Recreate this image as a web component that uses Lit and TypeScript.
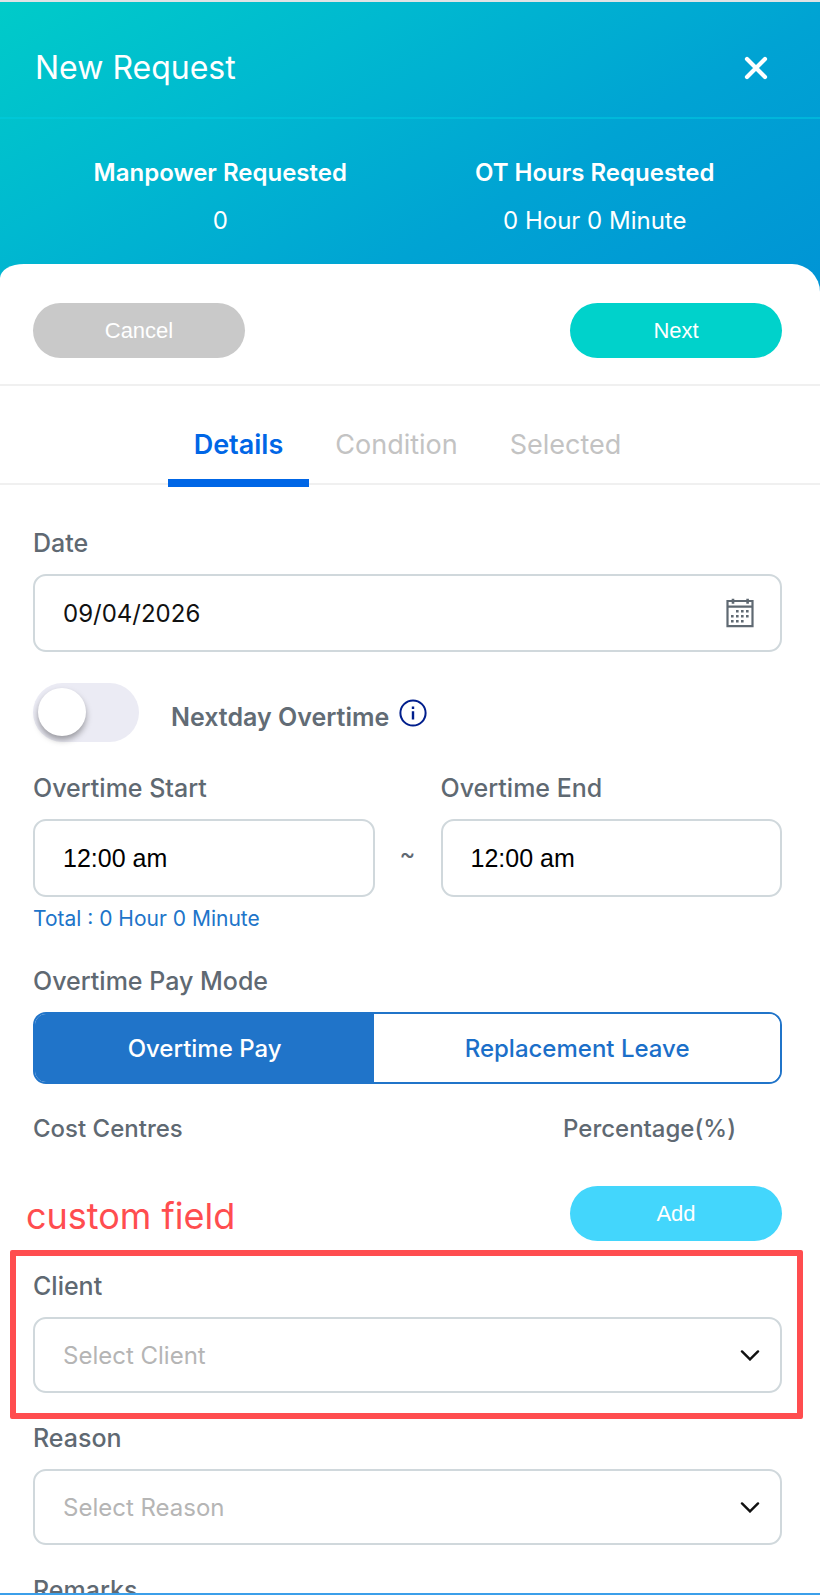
import { LitElement, html, css } from "lit";
import { customElement, property, state } from "lit/decorators.js";
import { classMap } from "lit/directives/class-map.js";

@customElement("select-field")
class SelectField extends LitElement {
  @property() label = "";
  @property() placeholder = "";

  static styles = css`
    :host {
      display: block;
    }
    .label {
      display: block;
      margin-bottom: 15px;
      font-size: 25px;
      line-height: 32px;
      font-weight: 500;
      color: #5f6972;
    }
    .box {
      display: grid;
      align-items: center;
    }
    .control {
      grid-area: 1 / 1;
      appearance: none;
      width: 100%;
      height: 76px;
      box-sizing: border-box;
      margin: 0;
      padding: 0 72px 0 28px;
      border: 2px solid #d0d8dc;
      border-radius: 13px;
      background: #fff;
      color: #b5b5b5;
      font-family: inherit;
      font-size: 24px;
    }
    .chevron {
      grid-area: 1 / 1;
      justify-self: end;
      width: 20px;
      height: 12px;
      margin-right: 22px;
      pointer-events: none;
    }
  `;

  render() {
    return html`
      <label class="label" for="control">${this.label}</label>
      <div class="box">
        <select class="control" id="control">
          <option>${this.placeholder}</option>
        </select>
        <svg class="chevron" viewBox="0 0 20 12" fill="none" stroke="#111" stroke-width="2.4" aria-hidden="true">
          <path d="M2 2.4 L10 10.4 L18 2.4" stroke-linecap="round" />
        </svg>
      </div>
    `;
  }
}

@customElement("app-root")
class AppRoot extends LitElement {
  @state() private tab = "Details";
  @state() private payMode = "Overtime Pay";

  static styles = css`
    :host {
      display: flex;
      flex-direction: column;
      height: 100vh;
      box-sizing: border-box;
      border-top: 2px solid #dfe3e5;
      border-bottom: 2px solid #3b9fea;
      background: #fff;
      font-family: Inter, "Liberation Sans", sans-serif;
      font-size: 24px;
      line-height: 32px;
    }
    button {
      margin: 0;
      border: 0;
      font-family: inherit;
      cursor: pointer;
    }
    .page {
      flex: 1;
      min-height: 0;
      overflow: hidden;
    }
    .header {
      padding-bottom: 28px;
      background: linear-gradient(150deg, #00cbc9 0%, #00b9d0 31%, #00a3d3 64%, #0094d5 100%);
      color: #fff;
    }
    .title-row {
      display: flex;
      align-items: center;
      justify-content: space-between;
      padding: 46px 44px 29px 35px;
      border-bottom: 2px solid rgba(0, 205, 225, 0.5);
    }
    .title {
      margin: 0;
      font-size: 32px;
      line-height: 40px;
      font-weight: 400;
    }
    .close {
      display: grid;
      place-items: center;
      width: 40px;
      height: 40px;
      padding: 0;
      background: none;
    }
    .close-icon {
      width: 24px;
      height: 24px;
    }
    .stats {
      display: grid;
      grid-template-columns: 1fr 1fr;
      margin: 0;
      padding: 38px 38px 27px 33px;
      text-align: center;
    }
    .stat-name {
      font-weight: 600;
    }
    .stat-value {
      margin: 16px 0 0;
    }
    .sheet {
      margin-top: -28px;
      border-radius: 24px 28px 0 0 / 14px 28px 0 0;
      background: #fff;
    }
    .actions {
      display: flex;
      justify-content: space-between;
      padding: 39px 38px 26px 33px;
      border-bottom: 2px solid #f0f0f0;
    }
    .pill {
      width: 212px;
      height: 55px;
      border-radius: 28px;
      color: #fff;
      font-family: "Liberation Sans", Arial, sans-serif;
      font-size: 22px;
    }
    .cancel {
      background: #c9c9c9;
    }
    .next {
      background: #00d2cb;
    }
    .add {
      background: #43d6fc;
    }
    .tabs {
      display: flex;
      justify-content: center;
      padding: 43px 5px 0 0;
      border-bottom: 2px solid #f0f0f0;
    }
    .tab {
      margin-bottom: -4px;
      padding: 0 26px 18px;
      border-bottom: 8px solid transparent;
      background: none;
      color: #c3c3c3;
      font-size: 27px;
      line-height: 32px;
    }
    .tab.active {
      border-bottom-color: #0066e6;
      color: #0066e6;
      font-weight: 600;
    }
    .form {
      display: flex;
      flex-direction: column;
      gap: 29px;
      padding: 42px 38px 29px 33px;
    }
    .label {
      display: block;
      font-size: 25px;
      font-weight: 500;
      color: #5f6972;
    }
    .field .label {
      margin-bottom: 15px;
    }
    .input-box {
      display: flex;
      align-items: center;
      height: 78px;
      box-sizing: border-box;
      padding: 0 26px 0 28px;
      border: 2px solid #d0d8dc;
      border-radius: 13px;
      background: #fff;
    }
    .input {
      flex: 1;
      width: 100%;
      min-width: 0;
      padding: 0;
      border: 0;
      outline: 0;
      background: none;
      color: #111;
      font-family: inherit;
      font-size: 24px;
    }
    .time .input {
      color: #000;
      font-family: "Liberation Sans", Arial, sans-serif;
      font-size: 25px;
    }
    .calendar {
      display: grid;
      padding: 0;
      background: none;
    }
    .calendar-icon {
      width: 28px;
      height: 30px;
    }
    .nextday {
      display: flex;
      align-items: center;
      height: 62px;
    }
    .switch {
      appearance: none;
      display: flex;
      align-items: center;
      width: 106px;
      height: 59px;
      margin: 0 32px 0 0;
      padding: 0 5px;
      box-sizing: border-box;
      border-radius: 30px;
      background: #ebebf4;
      cursor: pointer;
    }
    .switch::before {
      content: "";
      width: 48px;
      height: 48px;
      border-radius: 50%;
      background: #fff;
      box-shadow: 0 4px 6px rgba(0, 0, 0, 0.35);
    }
    .switch:checked {
      justify-content: flex-end;
      background: #2074c9;
    }
    .nextday .label {
      padding-top: 10px;
      font-weight: 600;
      color: #626c75;
    }
    .info {
      display: grid;
      margin-left: 10px;
      padding: 2px 0 0;
      background: none;
    }
    .info-icon {
      width: 28px;
      height: 28px;
    }
    .times {
      display: grid;
      grid-template-columns: minmax(0, 1fr) 66px minmax(0, 1fr);
      align-items: end;
    }
    .tilde {
      padding-bottom: 27px;
      text-align: center;
      color: #5f6972;
    }
    .total {
      margin: 8px 0 3px;
      font-size: 21px;
      line-height: 28px;
      color: #2074c9;
    }
    .segments {
      display: grid;
      grid-template-columns: 341fr 408fr;
      height: 72px;
      box-sizing: border-box;
      overflow: hidden;
      border: 2px solid #2074c9;
      border-radius: 13px;
    }
    .segment {
      background: #fff;
      color: #1b6fc9;
      font-size: 24px;
      font-weight: 500;
    }
    .segment.active {
      background: #2074c9;
      color: #fff;
    }
    .cost-head {
      display: flex;
      justify-content: space-between;
      padding-right: 46px;
    }
    .cost-head .label {
      font-size: 24px;
    }
    .cost-actions {
      display: flex;
      justify-content: flex-end;
      padding-top: 12px;
    }
    .custom {
      position: relative;
    }
    .custom-frame {
      position: absolute;
      inset: -20px -21px -26px -23px;
      border: 6px solid #ff4d4f;
      border-radius: 2px;
      pointer-events: none;
    }
    .custom-note {
      position: absolute;
      left: -7px;
      bottom: calc(100% + 32px);
      font-size: 36px;
      line-height: 44px;
      color: #ff4d4f;
    }
  `;

  private renderTab(name: string) {
    const active = this.tab === name;
    return html`<button
      class=${classMap({ tab: true, active })}
      role="tab"
      aria-selected=${active ? "true" : "false"}
      @click=${() => (this.tab = name)}
    >${name}</button>`;
  }

  private renderSegment(name: string) {
    const active = this.payMode === name;
    return html`<button
      class=${classMap({ segment: true, active })}
      aria-pressed=${active ? "true" : "false"}
      @click=${() => (this.payMode = name)}
    >${name}</button>`;
  }

  private renderTime(id: string, name: string) {
    return html`<div class="field time">
      <label class="label" for=${id}>${name}</label>
      <div class="input-box"><input class="input" id=${id} type="text" value="12:00 am" /></div>
    </div>`;
  }

  private renderCalendarIcon() {
    const dots = [
      [11, 12], [16, 12], [21, 12],
      [6, 17], [11, 17], [16, 17], [21, 17],
      [6, 22], [11, 22], [16, 22],
    ];
    const d = dots.map(([x, y]) => `M${x - 1} ${y}h2.6v2.6h-2.6z`).join("");
    return html`<svg class="calendar-icon" viewBox="0 0 28 30" aria-hidden="true">
      <path d="M1.5 3h25v25.2h-25z M1.5 8.6h25" fill="none" stroke="#5f6972" stroke-width="2.2" />
      <path d="M7 .8v5 M21.6 .8v5" stroke="#5f6972" stroke-width="2.6" />
      <path d=${d} fill="#5f6972" />
    </svg>`;
  }

  render() {
    return html`
      <div class="page">
        <header class="header">
          <div class="title-row">
            <h1 class="title">New Request</h1>
            <button class="close" aria-label="Close">
              <svg class="close-icon" viewBox="0 0 24 24" fill="none" stroke="#fff" stroke-width="4.2" stroke-linecap="round" aria-hidden="true">
                <path d="M3 3 L21 21 M21 3 L3 21" />
              </svg>
            </button>
          </div>
          <dl class="stats">
            <div>
              <dt class="stat-name">Manpower Requested</dt>
              <dd class="stat-value">0</dd>
            </div>
            <div>
              <dt class="stat-name">OT Hours Requested</dt>
              <dd class="stat-value">0 Hour 0 Minute</dd>
            </div>
          </dl>
        </header>

        <main class="sheet">
          <div class="actions">
            <button class="pill cancel">Cancel</button>
            <button class="pill next">Next</button>
          </div>

          <div class="tabs" role="tablist">
            ${["Details", "Condition", "Selected"].map((t) => this.renderTab(t))}
          </div>

          <div class="form">
            <div class="field">
              <label class="label" for="date">Date</label>
              <div class="input-box">
                <input class="input" id="date" type="text" value="09/04/2026" />
                <button class="calendar" aria-label="Choose date">${this.renderCalendarIcon()}</button>
              </div>
            </div>

            <div class="nextday">
              <input class="switch" id="nextday" type="checkbox" role="switch" />
              <label class="label" for="nextday">Nextday Overtime</label>
              <button class="info" aria-label="About nextday overtime">
                <svg class="info-icon" viewBox="0 0 28 28" fill="none" stroke="#001e8c" aria-hidden="true">
                  <circle cx="14" cy="14" r="12.6" stroke-width="2" />
                  <path d="M14 12.2V20.4 M14 7.6V10" stroke-width="2.4" />
                </svg>
              </button>
            </div>

            <div>
              <div class="times">
                ${this.renderTime("start", "Overtime Start")}
                <span class="tilde">~</span>
                ${this.renderTime("end", "Overtime End")}
              </div>
              <p class="total">Total : 0 Hour 0 Minute</p>
            </div>

            <div class="field">
              <span class="label" id="pay-mode">Overtime Pay Mode</span>
              <div class="segments" role="group" aria-labelledby="pay-mode">
                ${["Overtime Pay", "Replacement Leave"].map((m) => this.renderSegment(m))}
              </div>
            </div>

            <div class="cost-head">
              <span class="label">Cost Centres</span>
              <span class="label">Percentage(%)</span>
            </div>
            <div class="cost-actions">
              <button class="pill add">Add</button>
            </div>

            <div class="custom">
              <span class="custom-note">custom field</span>
              <select-field label="Client" placeholder="Select Client"></select-field>
              <div class="custom-frame"></div>
            </div>
            <select-field label="Reason" placeholder="Select Reason"></select-field>
            <div class="field">
              <label class="label" for="remarks">Remarks</label>
              <div class="input-box"><input class="input" id="remarks" type="text" /></div>
            </div>
          </div>
        </main>
      </div>
    `;
  }
}
